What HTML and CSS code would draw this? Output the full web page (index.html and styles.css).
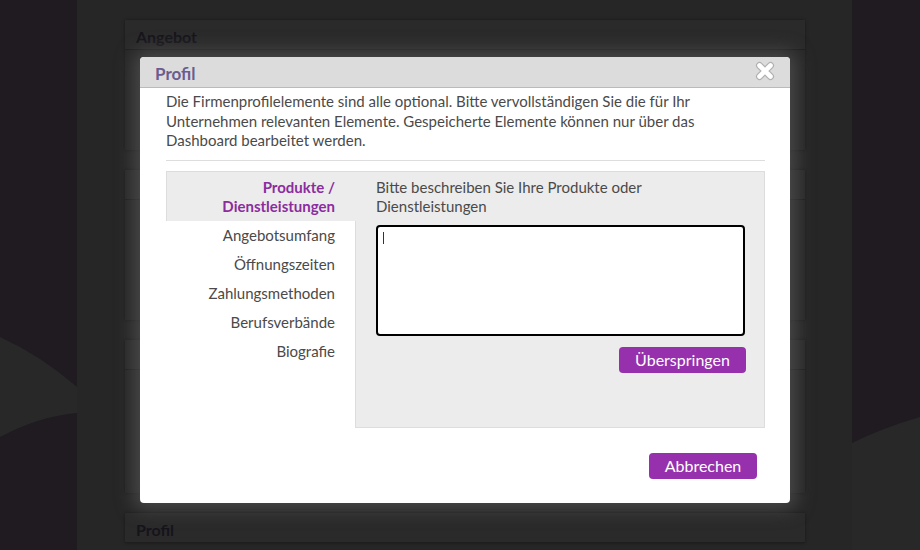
FILE: index.html
```html
<!DOCTYPE html>
<html lang="de">
<head>
<meta charset="utf-8">
<title>Profil</title>
<link rel="stylesheet" href="styles.css">
</head>
<body>
<div class="page">
  <div class="strip strip-left">
    <svg class="deco" width="77" height="550" viewBox="0 0 77 550"><path d="M0 337 Q40 355 77 387 L77 413 Q40 416 0 437 Z" fill="#282828"/></svg>
  </div>
  <div class="main">
    <div class="column">
      <section class="card card-a"><h2 class="card-head">Angebot</h2><div class="card-body"></div></section>
      <section class="card card-b"><h2 class="card-head">&nbsp;</h2><div class="card-body"></div></section>
      <section class="card card-c"><h2 class="card-head">&nbsp;</h2><div class="card-body"></div></section>
      <section class="card card-d"><h2 class="card-head">Profil</h2></section>
    </div>
  </div>
  <div class="strip strip-right">
    <svg class="deco" width="68" height="550" viewBox="0 0 68 550"><path d="M0 443 Q30 428 68 417 L68 550 L0 550 Z" fill="#282828"/></svg>
  </div>
</div>

<div class="modal">
  <div class="modal-head">
    <h1 class="modal-title">Profil</h1>
    <button class="close" aria-label="Schließen">
      <svg width="22" height="20" viewBox="0 0 22 20"><g stroke-linecap="round"><path d="M5.5 4.5 L16.5 15.5 M16.5 4.5 L5.5 15.5" stroke="#b0b0b0" stroke-width="7"/><path d="M5.5 4.5 L16.5 15.5 M16.5 4.5 L5.5 15.5" stroke="#ffffff" stroke-width="4.6"/></g></svg>
    </button>
  </div>
  <div class="modal-body">
    <p class="intro">Die Firmenprofilelemente sind alle optional. Bitte vervollständigen Sie die für Ihr Unternehmen relevanten Elemente. Gespeicherte Elemente können nur über das Dashboard bearbeitet werden.</p>
    <div class="tabs">
      <ul class="tab-list">
        <li class="tab active">Produkte / Dienstleistungen</li>
        <li class="tab">Angebotsumfang</li>
        <li class="tab">Öffnungszeiten</li>
        <li class="tab">Zahlungsmethoden</li>
        <li class="tab">Berufsverbände</li>
        <li class="tab">Biografie</li>
      </ul>
      <div class="panel">
        <p class="panel-text">Bitte beschreiben Sie Ihre Produkte oder Dienstleistungen</p>
        <div class="textarea"><span class="caret"></span></div>
        <div class="panel-actions"><button class="btn btn-skip">Überspringen</button></div>
      </div>
    </div>
    <div class="modal-actions"><button class="btn btn-cancel">Abbrechen</button></div>
  </div>
</div>
</body>
</html>
```

FILE: styles.css
```css
* { box-sizing: border-box; }
html, body { margin: 0; padding: 0; }
body {
  width: 920px;
  height: 550px;
  overflow: hidden;
  background: #1f1b21;
  font-family: Lato, "Open Sans", sans-serif;
  position: relative;
}
.page {
  display: flex;
  height: 550px;
}
.strip { height: 550px; background: #1f1b21; }
.strip-left { width: 77px; }
.strip-right { width: 68px; }
.deco { display: block; }
.main {
  flex: 1;
  background: #262626;
  padding: 20px 47px 0 48px;
}
.column {
  display: flex;
  flex-direction: column;
}
.card {
  background: #272727;
  box-shadow: 0 0 3px rgba(0,0,0,0.35);
}
.card-head {
  margin: 0;
  height: 30px;
  line-height: 30px;
  padding: 2px 0 0 11px;
  font-size: 16px;
  font-weight: 700;
  color: #16141b;
  background: #2a2a2a;
  border-bottom: 1px solid #1e1e1e;
}
.card-a .card-body { height: 100px; }
.card-b { margin-top: 20px; }
.card-b .card-body { height: 120px; }
.card-c { margin-top: 20px; }
.card-c .card-body { height: 123px; }
.card-d { margin-top: 20px; }

/* modal */
.modal {
  position: absolute;
  left: 140px;
  top: 57px;
  width: 650px;
  height: 446px;
  background: #ffffff;
  border-radius: 4px;
  box-shadow: 0 0 18px 6px rgba(85,85,85,0.75);
  display: flex;
  flex-direction: column;
}
.modal-head {
  height: 31px;
  background: #dcdcdc;
  border-bottom: 1px solid #b9b7c9;
  border-radius: 4px 4px 0 0;
  display: flex;
  align-items: center;
  justify-content: space-between;
  padding: 0 14px 0 15px;
}
.modal-title {
  margin: 0;
  font-size: 17px;
  font-weight: 700;
  color: #6b5c90;
  line-height: 30px;
  padding-top: 4px;
}
.close {
  border: 0;
  background: none;
  padding: 0;
  width: 22px;
  height: 20px;
  display: block;
  margin-top: -2px;
}
.close svg { display: block; }
.modal-body {
  flex: 1;
  padding: 4px 25px 0 26px;
  display: flex;
  flex-direction: column;
}
.intro {
  margin: 0;
  font-size: 15px;
  line-height: 19.5px;
  color: #4a4a4a;
  padding-bottom: 9px;
  border-bottom: 1px solid #dddddd;
}
.tabs {
  margin-top: 10px;
  display: flex;
  height: 257px;
}
.tab-list {
  list-style: none;
  margin: 0;
  padding: 0;
  width: 189px;
  position: relative;
  z-index: 1;
}
.tab {
  font-size: 15px;
  line-height: 29px;
  color: #4a4a4a;
  text-align: right;
  padding: 0 20px 0 30px;
}
.tab.active {
  background: #ececec;
  border-top: 1px solid #dddddd;
  border-left: 1px solid #dddddd;
  margin-right: -1px;
  color: #8b2c9f;
  font-weight: 700;
  line-height: 19.5px;
  padding: 6px 21px 4px 30px;
  height: 50px;
}
.panel {
  flex: 1;
  background: #ececec;
  border: 1px solid #dddddd;
  padding: 6px 18px 0 20px;
}
.panel-text {
  margin: 0;
  font-size: 15px;
  line-height: 19.5px;
  color: #4a4a4a;
  max-width: 300px;
}
.textarea {
  margin-top: 8px;
  margin-right: 1px;
  height: 111px;
  background: #ffffff;
  border: 2px solid #000000;
  border-radius: 4px;
  padding: 5px 5px;
}
.caret {
  display: block;
  width: 1px;
  height: 12px;
  background: #333333;
}
.panel-actions {
  display: flex;
  justify-content: flex-end;
  margin-top: 11px;
}
.btn {
  border: 0;
  border-radius: 4px;
  background: #9630ad;
  color: #ffffff;
  font-family: Lato, "Open Sans", sans-serif;
  font-size: 16px;
  height: 26px;
  line-height: 26px;
  padding: 0;
  text-align: center;
}
.btn-skip { width: 127px; }
.btn-cancel { width: 108px; }
.modal-actions {
  display: flex;
  justify-content: flex-end;
  margin-top: 25px;
  margin-right: 8px;
}
```
